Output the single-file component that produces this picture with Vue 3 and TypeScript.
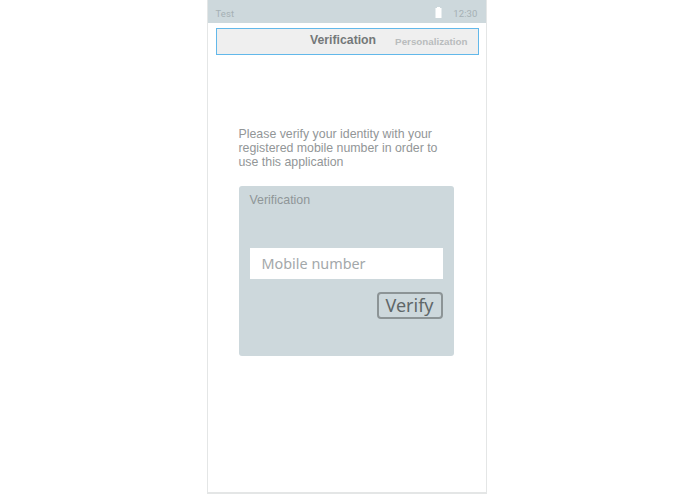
<script setup lang="ts">
const title = 'Verification'
</script>

<template>
  <div class="page">
    <div class="phone">
      <div class="status">
        <span class="app">Test</span>
        <span class="right">
          <svg class="battery" width="7" height="11" viewBox="0 0 7 11">
            <rect x="2" y="0" width="3" height="1" fill="#fff" />
            <rect x="0.5" y="1" width="6" height="10" fill="#fff" />
          </svg>
          <span class="time">12:30</span>
        </span>
      </div>
      <div class="tabs">
        <span class="tab-active">{{ title }}</span>
        <span class="tab-next">Personalization</span>
      </div>
      <div class="content">
        <p class="intro">Please verify your identity with your registered mobile number in order to use this application</p>
        <div class="card">
          <div class="card-title">{{ title }}</div>
          <div class="input">Mobile number</div>
          <div class="actions">
            <div class="btn">Verify</div>
          </div>
        </div>
      </div>
    </div>
  </div>
</template>

<style>
html, body { margin: 0; background: #fff; }
</style>

<style scoped>
.page {
  width: 695px;
  height: 494px;
  display: flex;
  justify-content: center;
  overflow: hidden;
  font-family: "Liberation Sans", Arial, sans-serif;
}
.phone {
  width: 280px;
  height: 494px;
  box-sizing: border-box;
  margin-left: -2px;
  border: 1px solid #e4e6e6;
  border-top: 0;
  border-bottom-width: 2px;
  display: flex;
  flex-direction: column;
}
.status {
  height: 23px;
  background: #cdd8dc;
  display: flex;
  align-items: center;
  justify-content: space-between;
  padding: 3px 8px 0 8px;
  box-sizing: border-box;
  font-family: Roboto, sans-serif;
  font-size: 9.5px;
  letter-spacing: 0.1px;
  color: #a5b0b4;
  flex: none;
}
.right { display: flex; align-items: center; gap: 11px; }
.battery { display: block; margin-top: -2px; }
.tabs {
  margin: 5px 7px 0 8px;
  height: 27px;
  box-sizing: border-box;
  border: 1px solid #62b8ea;
  background: #efefef;
  display: flex;
  align-items: center;
  justify-content: flex-end;
  padding: 0 10px 0 0;
  flex: none;
}
.tab-active {
  font-size: 12.25px;
  font-weight: 700;
  color: #747879;
  margin-right: 19px;
  margin-top: -3px;
}
.tab-next {
  font-size: 9.8px;
  font-weight: 700;
  color: #b9bcbd;
}
.content {
  padding: 73px 32px 0 31px;
}
.intro {
  margin: -1px 0 17px;
  padding-top: 1px;
  font-size: 12.35px;
  line-height: 13.8px;
  color: #929697;
}
.card {
  width: 215px;
  height: 170px;
  box-sizing: border-box;
  background: #cdd8dc;
  border-radius: 3px;
  padding: 7px 11px 0;
}
.card-title {
  font-size: 12.4px;
  line-height: 14px;
  color: #8f9698;
}
.input {
  margin-top: 41px;
  height: 31px;
  background: #fff;
  padding-left: 12px;
  font-family: "Noto Sans", sans-serif;
  font-size: 14.4px;
  line-height: 32px;
  color: #a3a8aa;
}
.actions {
  display: flex;
  justify-content: flex-end;
  margin-top: 13px;
}
.btn {
  width: 66px;
  height: 27px;
  box-sizing: border-box;
  border: 2px solid #8c9496;
  border-radius: 4px;
  font-family: "Noto Sans", sans-serif;
  font-size: 18px;
  line-height: 22px;
  text-align: center;
  color: #5f6769;
}
</style>
